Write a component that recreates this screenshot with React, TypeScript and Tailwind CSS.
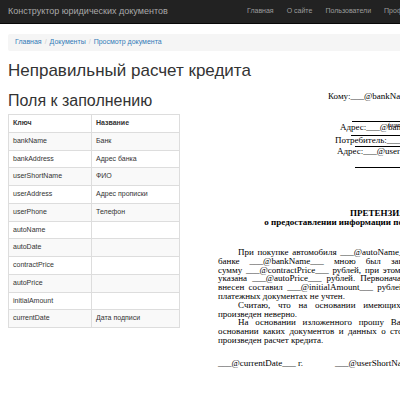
const rows: [string, string][] = [
  ["bankName", "Банк"],
  ["bankAddress", "Адрес банка"],
  ["userShortName", "ФИО"],
  ["userAddress", "Адрес прописки"],
  ["userPhone", "Телефон"],
  ["autoName", ""],
  ["autoDate", ""],
  ["contractPrice", ""],
  ["autoPrice", ""],
  ["initialAmount", ""],
  ["currentDate", "Дата подписи"],
];

// строки претензии, разбитые как в документе
const para1 = [
  "При покупке автомобиля ___@autoName___ ___@autoDate___ г. в кредит в",
  "банке ___@bankName___ мною был заключен кредитный договор на",
  "сумму ___@contractPrice___ рублей, при этом стоимость автомобиля в договоре",
  "указана ___@autoPrice___ рублей. Первоначальный взнос, который был мною",
  "внесен составил ___@initialAmount___ рублей, однако в кредитном договоре и",
];
const para2 = ["Считаю, что на основании имеющихся данных расчет кредита был"];
const para3 = [
  "На основании изложенного прошу Вас предоставить информацию, на",
  "основании каких документов и данных о стоимости автомобиля и взноса был",
];

function Lines({ lines, last }: { lines: string[]; last: string }) {
  return (
    <div>
      {lines.map((l, i) => (
        <div
          key={i}
          className={`whitespace-nowrap text-justify [text-align-last:justify] ${i === 0 ? "pl-[20px]" : ""}`}
        >
          {l}
        </div>
      ))}
      <div>{last}</div>
    </div>
  );
}

export default function App() {
  return (
    <div className="w-[400px] h-[400px] overflow-hidden bg-white font-['Liberation_Sans',Arial,sans-serif] text-[#333]">
      {/* навбар */}
      <div className="h-[24px] bg-[#222] border-b border-[#080808] flex items-center w-[600px]">
        <div className="w-[247px] pl-[8px] text-[9px] text-[#a9a9a9]">
          Конструктор юридических документов
        </div>
        <div className="flex gap-[13px] text-[7px] text-[#9d9d9d]">
          <span>Главная</span>
          <span>О сайте</span>
          <span>Пользователи</span>
          <span>Профиль</span>
        </div>
      </div>

      <div className="px-[8px] w-[600px]">
        {/* хлебные крошки */}
        <div className="mt-[10px] h-[17px] bg-[#f5f5f5] rounded-[2px] px-[7px] flex items-center text-[7px] text-[#337ab7]">
          <span>Главная</span>
          <span className="text-[#ccc] px-[3px]">/</span>
          <span>Документы</span>
          <span className="text-[#ccc] px-[3px]">/</span>
          <span>Просмотр документа</span>
        </div>

        <h1 className="mt-[8px] text-[17px] leading-[24px]">Неправильный расчет кредита</h1>

        <div className="flex">
          {/* поля */}
          <div className="w-[172px] shrink-0 pt-[8px]">
            <h3 className="text-[16px] leading-[20px]">Поля к заполнению</h3>
            <table className="mt-[3px] w-full border-collapse text-[7px]">
              <thead>
                <tr className="h-[17.75px]">
                  <th className="border border-[#ddd] text-left font-bold px-[4px] w-[83px]">Ключ</th>
                  <th className="border border-[#ddd] text-left font-bold px-[4px]">Название</th>
                </tr>
              </thead>
              <tbody>
                {rows.map(([k, v], i) => (
                  <tr key={k} className={`h-[17.75px] ${i % 2 === 0 ? "bg-[#f9f9f9]" : ""}`}>
                    <td className="border border-[#ddd] px-[4px]">{k}</td>
                    <td className="border border-[#ddd] px-[4px]">{v}</td>
                  </tr>
                ))}
              </tbody>
            </table>
          </div>

          {/* документ */}
          <div className="ml-[38px] w-[320px] shrink-0 font-['Liberation_Serif','Times_New_Roman',serif] text-black text-[9px]">
            <div className="mt-[8px] leading-[11px] pl-[110px]">Кому:___@bankName___</div>
            <div className="ml-[134px] w-[150px] h-[20px] border-b border-black" />
            <div className="h-[1px] pl-[170px] text-[6px] leading-[6px] whitespace-nowrap">(наименование банка)</div>
            <div className="leading-[9px] pl-[122px]">Адрес:___@bankAddress___</div>
            <div className="ml-[133px] w-[150px] h-[4px] border-b border-black" />
            <div className="leading-[9px] pl-[117px]">Потребитель:___@userShortName___</div>
            <div className="ml-[137px] w-[150px] h-[2px] border-b border-black" />
            <div className="leading-[9px] pl-[119px]">Адрес:___@userAddress___</div>
            <div className="ml-[137px] w-[150px] h-[12px] border-b border-black" />

            <div className="mt-[41px] text-center font-bold leading-[9px]">
              <div>ПРЕТЕНЗИЯ</div>
              <div>о предоставлении информации по кредитному договору</div>
            </div>

            <div className="mt-[21px] leading-[8.8px]">
              <Lines lines={para1} last="платежных документах не учтен." />
              <Lines lines={para2} last="произведен неверно." />
              <Lines lines={para3} last="произведен расчет кредита." />
            </div>

            <div className="mt-[14px] leading-[9px] flex">
              <span className="w-[117px]">___@currentDate___ г.</span>
              <span>___@userShortName___</span>
            </div>
          </div>
        </div>
      </div>
    </div>
  );
}
